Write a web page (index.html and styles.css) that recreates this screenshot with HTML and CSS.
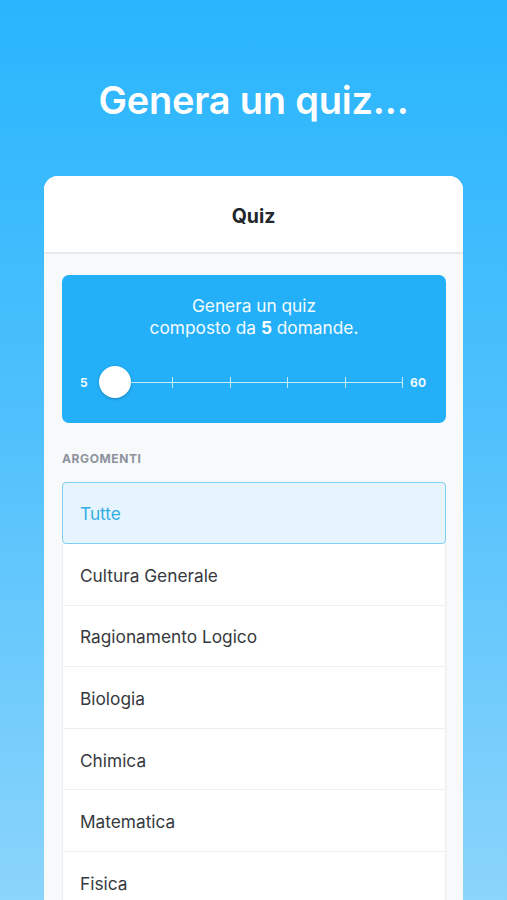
FILE: index.html
```html
<!doctype html>
<html lang="it">
<head>
  <meta charset="UTF-8">
  <title>Genera un quiz</title>
  <link rel="stylesheet" href="styles.css">
</head>
<body>
  <h1 class="headline">Genera un quiz...</h1>

  <div class="card">
    <div class="card-header">Quiz</div>
    <div class="card-body">
      <div class="generator">
        <p class="generator-text">Genera un quiz<br>composto da <b>5</b> domande.</p>
        <div class="slider">
          <span class="slider-label">5</span>
          <div class="track">
            <span class="tick" style="left: 20%"></span>
            <span class="tick" style="left: 40%"></span>
            <span class="tick" style="left: 60%"></span>
            <span class="tick" style="left: 80%"></span>
            <span class="tick" style="left: 100%"></span>
            <span class="thumb"></span>
          </div>
          <span class="slider-label">60</span>
        </div>
      </div>

      <div class="section-title">ARGOMENTI</div>
      <ul class="topics">
        <li class="topic selected">Tutte</li>
        <li class="topic">Cultura Generale</li>
        <li class="topic">Ragionamento Logico</li>
        <li class="topic">Biologia</li>
        <li class="topic">Chimica</li>
        <li class="topic">Matematica</li>
        <li class="topic">Fisica</li>
      </ul>
    </div>
  </div>
</body>
</html>
```

FILE: styles.css
```css
html, body{
  margin: 0;
  height: 900px;
  overflow: hidden;
}

body{
  background: linear-gradient(180deg, #29b5fd 0%, #4dc0fc 45%, #8bd4fb 100%);
  font-family: Inter, "Noto Sans", sans-serif;
}

.headline{
  margin: 0;
  padding-top: 77px;
  height: 176px;
  box-sizing: border-box;
  text-align: center;
  color: #fff;
  font-size: 38px;
  line-height: 46px;
  font-weight: 600;
  letter-spacing: -0.2px;
}

.card{
  margin: 0 44px;
  border-radius: 14px 14px 0 0;
  overflow: hidden;
  background: #f7f9fb;
  height: 724px;
}

.card-header{
  height: 78px;
  box-sizing: border-box;
  border-bottom: 2px solid #e6e9ee;
  background: #fff;
  display: flex;
  align-items: center;
  justify-content: center;
  padding-top: 3px;
  font-size: 19.5px;
  font-weight: 700;
  color: #24272c;
}

.card-body{
  padding: 21px 17px 0 18px;
}

.generator{
  height: 148px;
  box-sizing: border-box;
  background: #23b0f8;
  border-radius: 7px;
  padding-top: 20px;
  color: #fff;
}

.generator-text{
  margin: 0;
  text-align: center;
  font-size: 17.3px;
  line-height: 22px;
  color: #f4fbff;
}

.generator-text b{
  font-weight: 700;
  color: #fff;
}

.slider{
  display: flex;
  align-items: center;
  margin-top: 27px;
  padding: 0 20px 0 18px;
  height: 32px;
}

.slider-label{
  font-size: 12px;
  font-weight: 700;
  color: #f0f9ff;
}

.slider-label:first-child{
  width: 17px;
}

.slider-label:last-child{
  margin-left: auto;
}

.track{
  position: relative;
  width: 287px;
  margin-left: 18px;
  height: 1px;
  background: rgba(255,255,255,0.75);
}

.tick{
  position: absolute;
  top: -5px;
  width: 1px;
  height: 11px;
  background: rgba(255,255,255,0.75);
}

.thumb{
  position: absolute;
  left: -16px;
  top: -16px;
  width: 32px;
  height: 32px;
  border-radius: 50%;
  background: #fff;
  box-shadow: 0 1px 3px rgba(0,0,0,0.25);
}

.section-title{
  margin-top: 28px;
  font-size: 12px;
  font-weight: 700;
  color: #8c929b;
  letter-spacing: 0.6px;
  line-height: 15px;
}

.topics{
  list-style: none;
  margin: 16px 0 0;
  padding: 0;
}

.topic{
  height: 61.6px;
  box-sizing: border-box;
  display: flex;
  align-items: center;
  padding-left: 17px;
  padding-top: 2px;
  background: #fff;
  border: 1px solid #eceef2;
  border-top: none;
  font-size: 17.3px;
  color: #36393e;
}

.topic.selected{
  height: 62px;
  padding-top: 0;
  border: 1.5px solid #7fcdf0;
  border-radius: 4px;
  background: #e6f5fd;
  color: #33ade6;
}
```
